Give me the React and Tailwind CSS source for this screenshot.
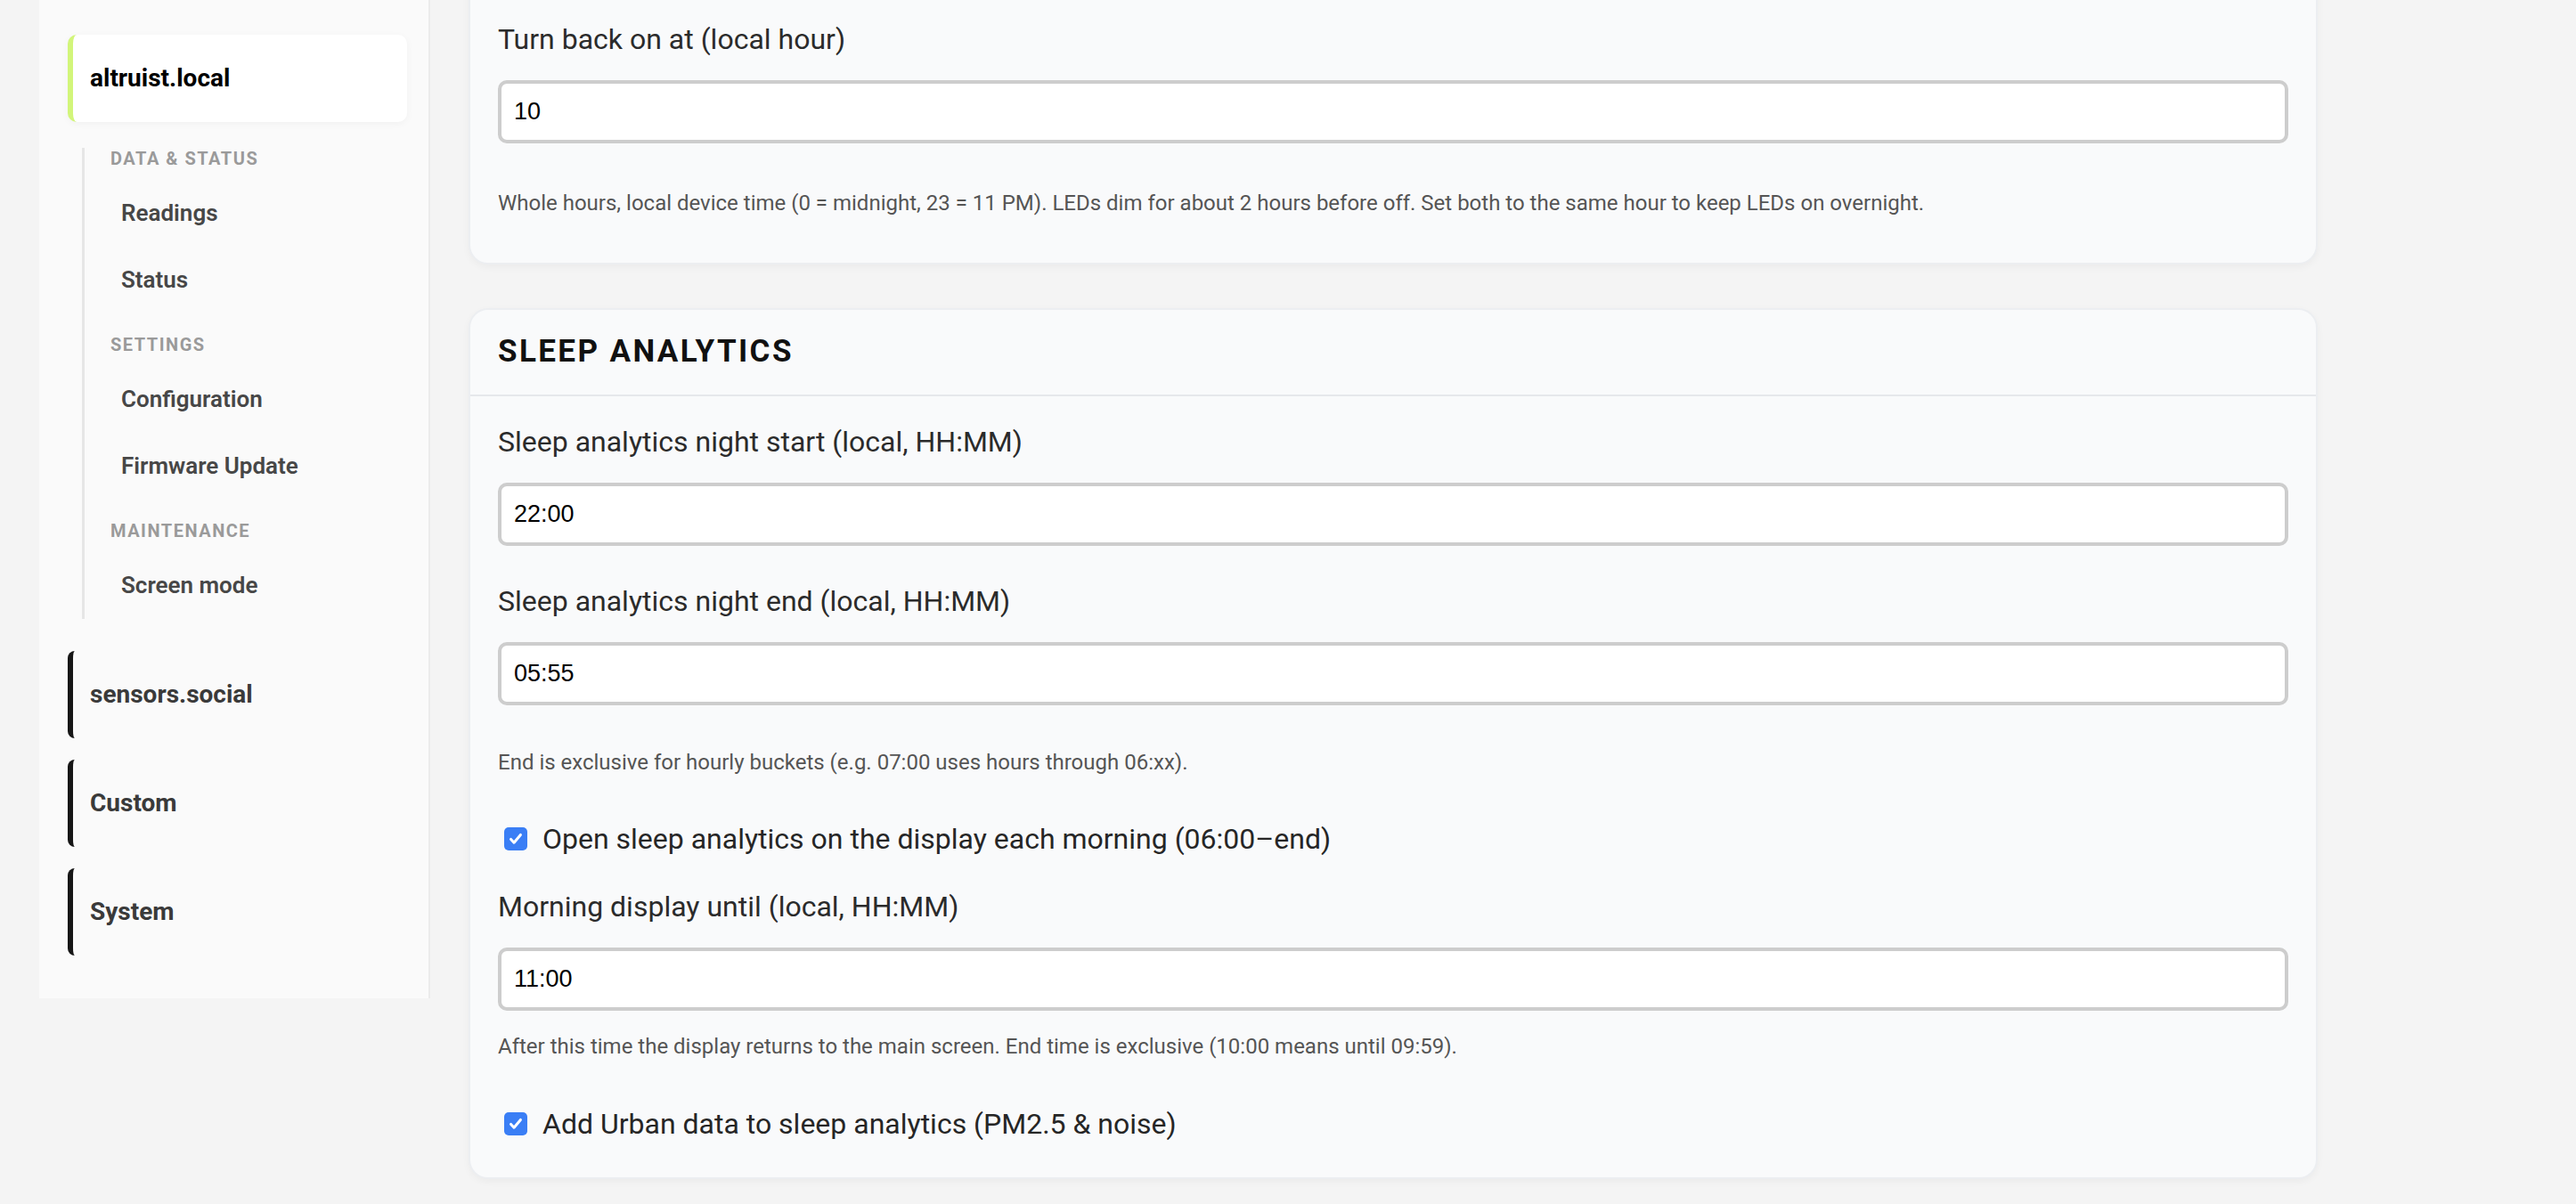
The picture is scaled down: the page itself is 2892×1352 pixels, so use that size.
import { useState } from 'react'

// Sidebar: device groups with the sub navigation of the open one
const sections = [
  { title: 'Data & Status', items: ['Readings', 'Status'] },
  { title: 'Settings', items: ['Configuration', 'Firmware Update'] },
  { title: 'Maintenance', items: ['Screen mode'] },
]

const groups = ['sensors.social', 'Custom', 'System']

function Sidebar() {
  return (
    <aside className="w-[439px] shrink-0 -mt-[20px] pt-[59px] pb-[48px] pl-[32px] pr-[24px] bg-[#fafafa] border-r-2 border-[#ebebeb]">
      <div className="h-[98px] flex items-center pl-[19px] bg-white rounded-[10px] border-l-[6px] border-[#d2f57a] shadow-[0_2px_8px_rgba(0,0,0,0.04)]">
        <span className="text-[28px] font-bold text-black">altruist.local</span>
      </div>

      <nav className="mt-[29px] ml-[16px] border-l-[3px] border-[#e6e6e6]">
        {sections.map((section, i) => (
          <div key={section.title}>
            <div
              className={
                'pl-[29px] leading-[24px] text-[20px] font-bold uppercase tracking-[1.5px] text-[#9a9a9a] mb-[12px] ' +
                (i === 0 ? 'mt-0' : 'mt-[23px]')
              }
            >
              {section.title}
            </div>
            {section.items.map((item) => (
              <div key={item} className="h-[75px] flex items-center pl-[41px] text-[26px] font-semibold text-[#474747]">
                {item}
              </div>
            ))}
          </div>
        ))}
      </nav>

      <div className="mt-[36px] flex flex-col gap-[24px]">
        {groups.map((g) => (
          <div key={g} className="h-[98px] flex items-center pl-[19px] rounded-[8px] border-l-[6px] border-[#161616]">
            <span className="text-[28px] font-bold text-[#3a3a3a]">{g}</span>
          </div>
        ))}
      </div>
    </aside>
  )
}

function Field({ label, value, onChange }) {
  return (
    <div>
      <label className="block leading-[38px] text-[32px] text-[#2b2b2b]">{label}</label>
      <input
        type="text"
        value={value}
        onChange={(e) => onChange(e.target.value)}
        className="mt-[27px] block w-full h-[71px] px-[14px] bg-white border-[4px] border-[#cdcdcd] rounded-[10px] font-['Liberation_Sans',Arial,sans-serif] text-[27px] text-black outline-none"
      />
    </div>
  )
}

function CheckRow({ checked, onToggle, children }) {
  return (
    <label className="h-[40px] flex items-center cursor-pointer" onClick={onToggle}>
      <span
        className={
          'ml-[7px] w-[26px] h-[26px] rounded-[5px] flex items-center justify-center ' +
          (checked ? 'bg-[#3a7ef5]' : 'bg-white border-2 border-[#999]')
        }
      >
        {checked && (
          <svg viewBox="0 0 24 24" className="w-[20px] h-[20px]" fill="none" stroke="white" strokeWidth="3.6" strokeLinecap="round" strokeLinejoin="round">
            <path d="M5.5 12.5l4.2 4.5L18.5 6.5" />
          </svg>
        )}
      </span>
      <span className="ml-[17px] leading-[40px] text-[32px] text-[#262626]">{children}</span>
    </label>
  )
}

export default function App() {
  const [form, setForm] = useState({
    backOn: '10',
    nightStart: '22:00',
    nightEnd: '05:55',
    morningUntil: '11:00',
    openMorning: true,
    urbanData: true,
  })

  const set = (key) => (value) => setForm((prev) => ({ ...prev, [key]: value }))
  const toggle = (key) => (e) => {
    e.preventDefault()
    setForm((prev) => ({ ...prev, [key]: !prev[key] }))
  }

  return (
    <div className="h-[1352px] overflow-hidden bg-[#f4f4f4] font-['Roboto',sans-serif]">
      <div className="flex items-start pl-[44px] gap-[43px]">
        <Sidebar />

        <main className="w-[2076px] shrink-0 -mt-[60px]">
          {/* LED schedule (tail end of the card) */}
          <section className="bg-[#f9fafb] border-2 border-[#eceef1] rounded-[22px] shadow-[0_3px_8px_rgba(0,0,0,0.04)] px-[31px] pt-[83px] pb-[51px]">
            <Field label="Turn back on at (local hour)" value={form.backOn} onChange={set('backOn')} />
            <p className="mt-[51px] leading-[32px] text-[24px] text-[#555]">
              Whole hours, local device time (0 = midnight, 23 = 11 PM). LEDs dim for about 2 hours before off. Set both to the same hour to keep LEDs on overnight.
            </p>
          </section>

          {/* Sleep analytics */}
          <section className="mt-[49px] bg-[#f9fafb] border-2 border-[#eceef1] rounded-[22px] shadow-[0_3px_8px_rgba(0,0,0,0.04)]">
            <div className="h-[97px] flex items-center px-[31px] border-b-2 border-[#e6e8eb]">
              <h2 className="text-[35px] font-bold uppercase tracking-[2.4px] text-[#111]">Sleep Analytics</h2>
            </div>
            <div className="px-[31px] pt-[32px] pb-[40px]">
              <Field label="Sleep analytics night start (local, HH:MM)" value={form.nightStart} onChange={set('nightStart')} />
              <div className="mt-[43px]">
                <Field label="Sleep analytics night end (local, HH:MM)" value={form.nightEnd} onChange={set('nightEnd')} />
              </div>
              <p className="mt-[48px] leading-[32px] text-[24px] text-[#555]">
                End is exclusive for hourly buckets (e.g. 07:00 uses hours through 06:xx).
              </p>
              <div className="mt-[50px]">
                <CheckRow checked={form.openMorning} onToggle={toggle('openMorning')}>
                  Open sleep analytics on the display each morning (06:00–end)
                </CheckRow>
              </div>
              <div className="mt-[37px]">
                <Field label="Morning display until (local, HH:MM)" value={form.morningUntil} onChange={set('morningUntil')} />
              </div>
              <p className="mt-[24px] leading-[32px] text-[24px] text-[#555]">
                After this time the display returns to the main screen. End time is exclusive (10:00 means until 09:59).
              </p>
              <div className="mt-[51px]">
                <CheckRow checked={form.urbanData} onToggle={toggle('urbanData')}>
                  Add Urban data to sleep analytics (PM2.5 &amp; noise)
                </CheckRow>
              </div>
            </div>
          </section>
        </main>
      </div>
    </div>
  )
}
